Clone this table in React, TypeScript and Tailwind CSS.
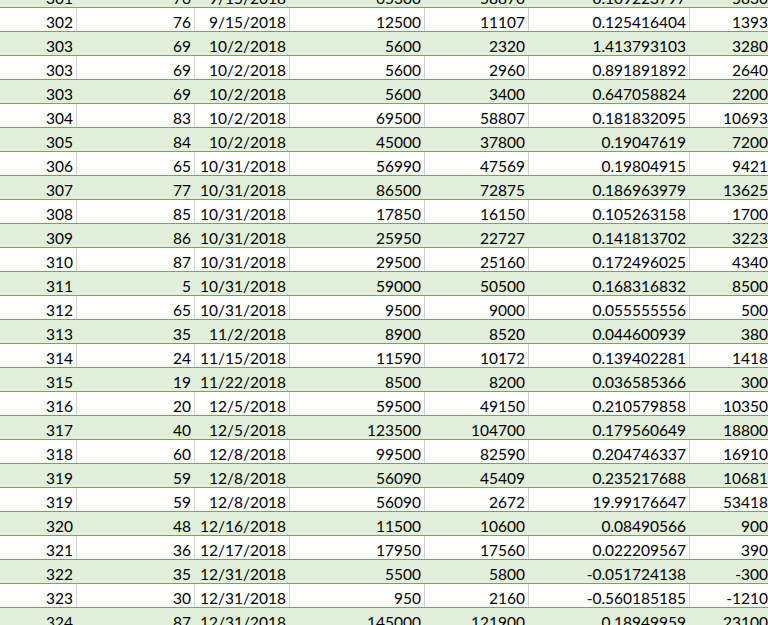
import React from 'react'

type Row = [string, string, string, string, string, string, string]

const rows: Row[] = [
  ['301', '76', '9/15/2018', '65300', '58870', '0.109223797', '5830'],
  ['302', '76', '9/15/2018', '12500', '11107', '0.125416404', '1393'],
  ['303', '69', '10/2/2018', '5600', '2320', '1.413793103', '3280'],
  ['303', '69', '10/2/2018', '5600', '2960', '0.891891892', '2640'],
  ['303', '69', '10/2/2018', '5600', '3400', '0.647058824', '2200'],
  ['304', '83', '10/2/2018', '69500', '58807', '0.181832095', '10693'],
  ['305', '84', '10/2/2018', '45000', '37800', '0.19047619', '7200'],
  ['306', '65', '10/31/2018', '56990', '47569', '0.19804915', '9421'],
  ['307', '77', '10/31/2018', '86500', '72875', '0.186963979', '13625'],
  ['308', '85', '10/31/2018', '17850', '16150', '0.105263158', '1700'],
  ['309', '86', '10/31/2018', '25950', '22727', '0.141813702', '3223'],
  ['310', '87', '10/31/2018', '29500', '25160', '0.172496025', '4340'],
  ['311', '5', '10/31/2018', '59000', '50500', '0.168316832', '8500'],
  ['312', '65', '10/31/2018', '9500', '9000', '0.055555556', '500'],
  ['313', '35', '11/2/2018', '8900', '8520', '0.044600939', '380'],
  ['314', '24', '11/15/2018', '11590', '10172', '0.139402281', '1418'],
  ['315', '19', '11/22/2018', '8500', '8200', '0.036585366', '300'],
  ['316', '20', '12/5/2018', '59500', '49150', '0.210579858', '10350'],
  ['317', '40', '12/5/2018', '123500', '104700', '0.179560649', '18800'],
  ['318', '60', '12/8/2018', '99500', '82590', '0.204746337', '16910'],
  ['319', '59', '12/8/2018', '56090', '45409', '0.235217688', '10681'],
  ['319', '59', '12/8/2018', '56090', '2672', '19.99176647', '53418'],
  ['320', '48', '12/16/2018', '11500', '10600', '0.08490566', '900'],
  ['321', '36', '12/17/2018', '17950', '17560', '0.022209567', '390'],
  ['322', '35', '12/31/2018', '5500', '5800', '-0.051724138', '-300'],
  ['323', '30', '12/31/2018', '950', '2160', '-0.560185185', '-1210'],
  ['324', '87', '12/31/2018', '145000', '121900', '0.18949959', '23100'],
]

// widths include the 1px right grid line
const colWidths = ['w-[77px]', 'w-[118px]', 'w-[95px]', 'w-[135px]', 'w-[104px]', 'w-[161px]', 'w-[82px]']

function SheetRow({ cells, banded }: { cells: Row; banded: boolean }) {
  return (
    <div className={banded ? 'flex h-[24px] border-b border-[#70ad47] bg-[#e2efda]' : 'flex h-[24px] border-b border-[#70ad47] bg-white'}>
      {cells.map((c, i) => (
        <div
          key={i}
          className={
            colWidths[i] +
            ' shrink-0 flex items-end justify-end pr-[3px] overflow-hidden whitespace-nowrap border-r ' +
            (banded ? 'border-transparent' : 'border-[#d4d4d4]')
          }
        >
          <span className="leading-[18px]">{c}</span>
        </div>
      ))}
    </div>
  )
}

export default function App() {
  return (
    <div className="w-[768px] h-[625px] overflow-hidden bg-white text-[15.5px] text-black font-['Lato','Open_Sans',sans-serif]">
      <div className="-mt-[16px] w-[772px]">
        {rows.map((r, i) => (
          <SheetRow key={i} cells={r} banded={i % 2 === 0} />
        ))}
      </div>
    </div>
  )
}
